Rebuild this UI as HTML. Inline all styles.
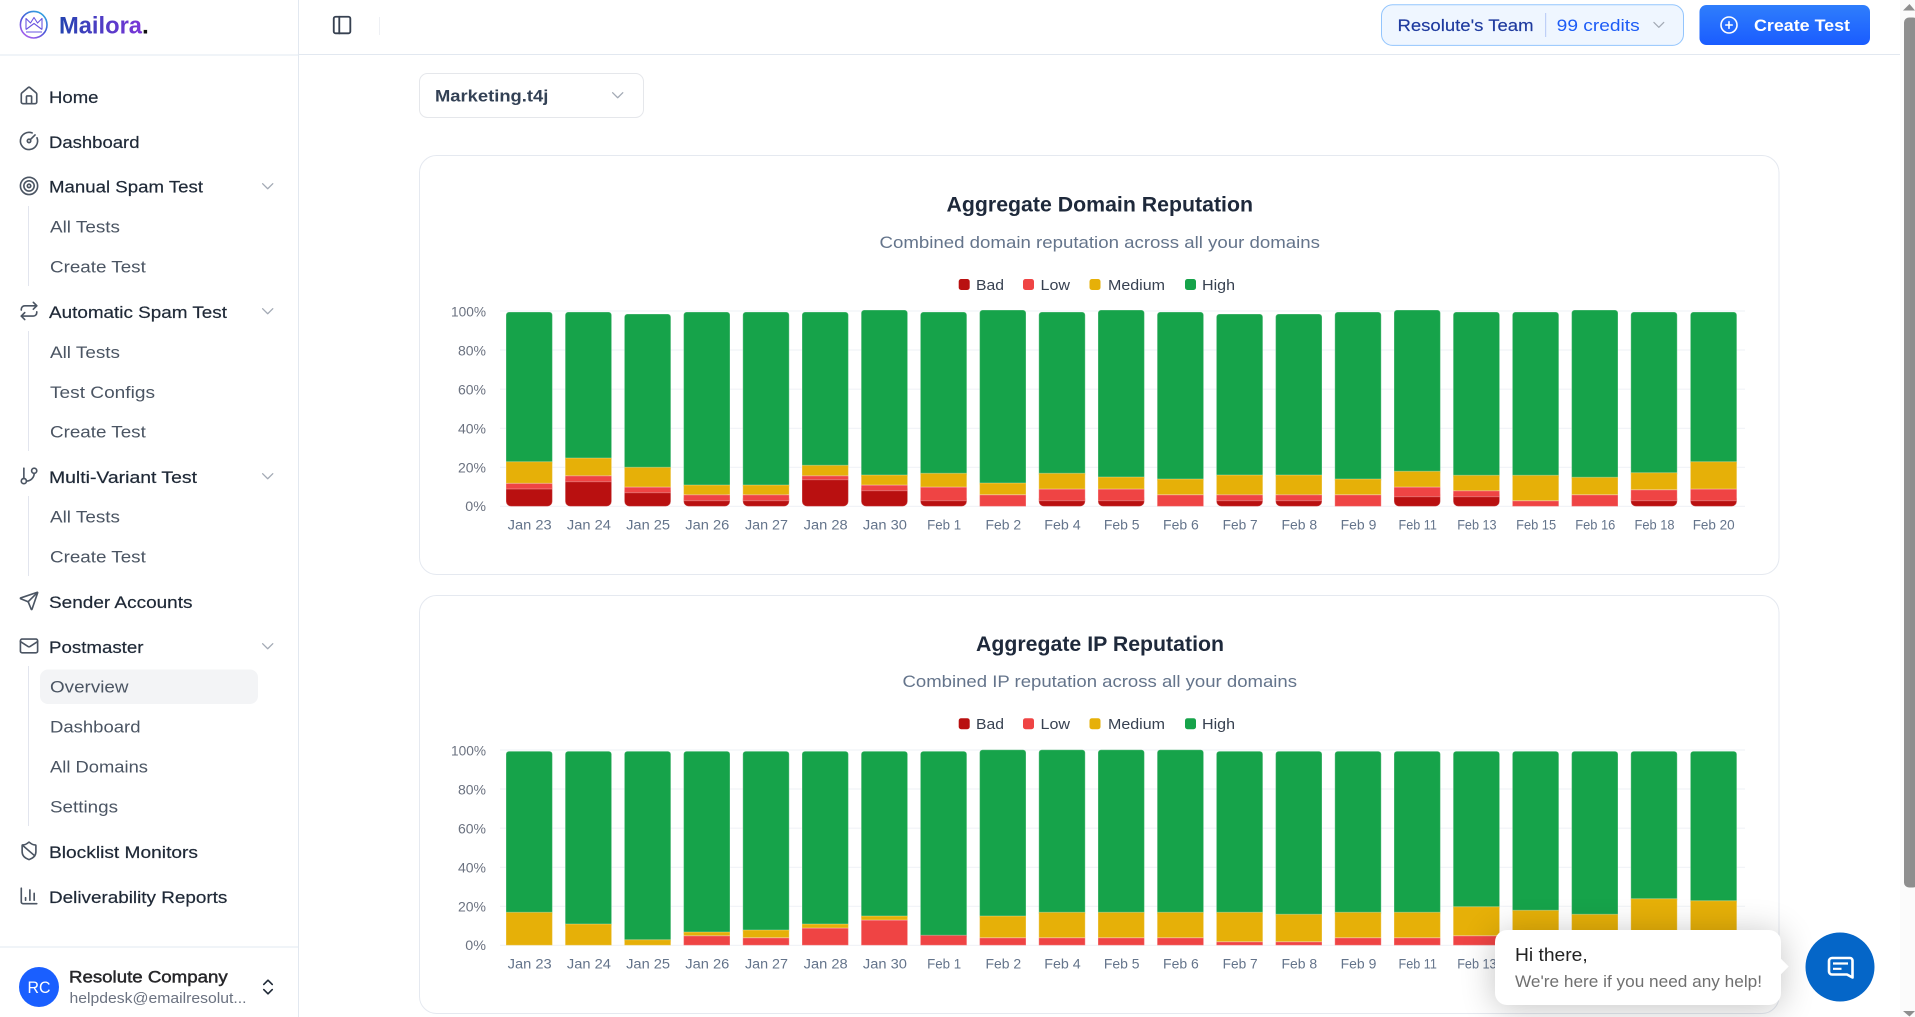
<!DOCTYPE html>
<html lang="en"><head><meta charset="utf-8"><title>Mailora</title>
<style>
html,body{margin:0;padding:0;width:1915px;height:1017px;overflow:hidden;background:#fff}
svg{position:absolute;left:0;top:0;display:block}
text{font-family:"Liberation Sans",sans-serif}
.t{font-size:16.5px;fill:#1f2937;stroke:#1f2937;stroke-width:.2px}
.s{font-size:16.5px;fill:#4b5563}
.i{fill:none;stroke:#4b5563;stroke-width:1.9;stroke-linecap:round;stroke-linejoin:round}
.c{fill:none;stroke:#a3aab5;stroke-width:1.5;stroke-linecap:round;stroke-linejoin:round}
.bars rect{width:46.4px;stroke:rgba(255,255,255,.3);stroke-width:1px}
.g{fill:#16a34a;rx:3px}.y{fill:#e6b008}.r{fill:#ef4444}.d{fill:#b91010;rx:5px}
.gl{stroke:#f1f3f7;stroke-width:1.2}
.yl{font-size:14.2px;fill:#6b7280;text-anchor:end}
.xl{font-size:14.2px;fill:#64748b;text-anchor:middle}
.lg{font-size:15px;fill:#374151}
.ti{font-size:21.5px;font-weight:700;fill:#1e293b}
.su{font-size:16.8px;fill:#64748b}
#pop{position:absolute;left:1495px;top:930px;width:286px;height:75px;background:#fff;border-radius:12px;box-shadow:0 3px 34px rgba(0,0,0,.24)}
#arr{position:absolute;left:1773px;top:960px;width:13px;height:13px;background:#fff;transform:rotate(45deg)}
</style></head><body>
<svg width="1915" height="1017" viewBox="0 0 1915 1017" xmlns="http://www.w3.org/2000/svg">
<defs>
<linearGradient id="lg1" gradientUnits="userSpaceOnUse" x1="59" y1="0" x2="142" y2="0"><stop offset="0" stop-color="#2344b0"/><stop offset="1" stop-color="#7a35d8"/></linearGradient>
<linearGradient id="lg2" gradientUnits="userSpaceOnUse" x1="42" y1="12" x2="25" y2="38"><stop offset="0" stop-color="#2fa6e0"/><stop offset=".5" stop-color="#4a55d8"/><stop offset="1" stop-color="#b060f0"/></linearGradient>
<linearGradient id="lg3" x1="0" y1="0" x2="0" y2="1"><stop offset="0" stop-color="#2f7efc"/><stop offset="1" stop-color="#1a5cff"/></linearGradient>
</defs>
<!-- chrome lines -->
<rect x="298" y="0" width="1" height="1017" fill="#e2e8f0"/>
<rect x="0" y="54.5" width="298" height="1" fill="#e2e8f0"/>
<rect x="299" y="54" width="1601" height="1" fill="#e2e8f0"/>
<rect x="0" y="946.5" width="298" height="1" fill="#e2e8f0"/>
<!-- logo -->
<circle cx="33.7" cy="24.7" r="13.3" fill="none" stroke="url(#lg2)" stroke-width="1.6"/>
<path d="M26 29.5V18.5L30.5 23L34 17.5L37.5 23L42 18.5V29.5M26 29.5L34 23.5L42 29.5M26 32H42" fill="none" stroke="#6a55e0" stroke-width="1.1" stroke-linejoin="round"/>
<text x="59" y="33.3" font-size="24.5" font-weight="700" fill="url(#lg1)" textLength="83" lengthAdjust="spacingAndGlyphs">Mailora</text>
<text x="142" y="33.3" font-size="24.5" font-weight="700" fill="#111">.</text>
<!-- nav rules + highlight -->
<g fill="#e2e5ee"><rect x="28" y="206" width="1" height="80"/><rect x="28" y="331" width="1" height="120"/><rect x="28" y="496" width="1" height="80"/><rect x="28" y="666" width="1" height="160"/></g>
<rect x="40" y="669.5" width="218" height="34.5" rx="8" fill="#f3f4f6"/>
<!-- icons -->
<g class="i">
<g transform="translate(18.7 85.6) scale(.86)"><path d="M15 21v-8a1 1 0 0 0-1-1h-4a1 1 0 0 0-1 1v8"/><path d="M3 10a2 2 0 0 1 .709-1.528l7-5.999a2 2 0 0 1 2.582 0l7 5.999A2 2 0 0 1 21 10v9a2 2 0 0 1-2 2H5a2 2 0 0 1-2-2z"/></g>
<g transform="translate(18.7 130.6) scale(.86)"><path d="M15.6 2.7a10 10 0 1 0 5.7 5.7"/><circle cx="12" cy="12" r="2"/><path d="M13.4 10.6 19 5"/></g>
<g transform="translate(18.7 175.6) scale(.86)"><circle cx="12" cy="12" r="10"/><circle cx="12" cy="12" r="6"/><circle cx="12" cy="12" r="2"/></g>
<g transform="translate(18.7 300.6) scale(.86)"><path d="m17 2 4 4-4 4"/><path d="M3 11v-1a4 4 0 0 1 4-4h14"/><path d="m7 22-4-4 4-4"/><path d="M21 13v1a4 4 0 0 1-4 4H3"/></g>
<g transform="translate(18.7 465.6) scale(.86)"><path d="M6 3v12"/><circle cx="18" cy="6" r="3"/><circle cx="6" cy="18" r="3"/><path d="M18 9a9 9 0 0 1-9 9"/></g>
<g transform="translate(18.7 590.6) scale(.86)"><path d="M14.536 21.686a.5.5 0 0 0 .937-.024l6.5-19a.496.496 0 0 0-.635-.635l-19 6.5a.5.5 0 0 0-.024.937l7.93 3.18a2 2 0 0 1 1.112 1.11z"/><path d="m21.854 2.147-10.94 10.939"/></g>
<g transform="translate(18.7 635.6) scale(.86)"><rect x="2" y="4" width="20" height="16" rx="2"/><path d="m22 7-8.97 5.7a1.94 1.94 0 0 1-2.06 0L2 7"/></g>
<g transform="translate(18.7 840.6) scale(.86)"><path d="M20 13c0 5-3.5 7.5-7.66 8.95a1 1 0 0 1-.67-.01C7.5 20.5 4 18 4 13V6a1 1 0 0 1 1-1c2 0 4.5-1.2 6.24-2.72a1.17 1.17 0 0 1 1.52 0C14.51 3.81 17 5 19 5a1 1 0 0 1 1 1z"/><path d="m4.243 5.21 14.39 12.472"/></g>
<g transform="translate(18.7 885.6) scale(.86)"><path d="M3 3v16a2 2 0 0 0 2 2h16"/><path d="M18 17V9"/><path d="M13 17V5"/><path d="M8 17v-3"/></g>
</g>
<g class="c">
<path transform="translate(257.5 176) scale(.85)" d="m6 9 6 6 6-6"/>
<path transform="translate(257.5 301) scale(.85)" d="m6 9 6 6 6-6"/>
<path transform="translate(257.5 466) scale(.85)" d="m6 9 6 6 6-6"/>
<path transform="translate(257.5 636) scale(.85)" d="m6 9 6 6 6-6"/>
</g>
<!-- nav text -->
<text class="t" x="49" y="103" textLength="49.5" lengthAdjust="spacingAndGlyphs">Home</text>
<text class="t" x="49" y="148" textLength="90.5" lengthAdjust="spacingAndGlyphs">Dashboard</text>
<text class="t" x="49" y="192.5" textLength="154" lengthAdjust="spacingAndGlyphs">Manual Spam Test</text>
<text class="s" x="50" y="232.5" textLength="70" lengthAdjust="spacingAndGlyphs">All Tests</text>
<text class="s" x="50" y="272.5" textLength="95.8" lengthAdjust="spacingAndGlyphs">Create Test</text>
<text class="t" x="49" y="318" textLength="178" lengthAdjust="spacingAndGlyphs">Automatic Spam Test</text>
<text class="s" x="50" y="358" textLength="70" lengthAdjust="spacingAndGlyphs">All Tests</text>
<text class="s" x="50" y="398" textLength="105" lengthAdjust="spacingAndGlyphs">Test Configs</text>
<text class="s" x="50" y="437.7" textLength="95.8" lengthAdjust="spacingAndGlyphs">Create Test</text>
<text class="t" x="49" y="483" textLength="148" lengthAdjust="spacingAndGlyphs">Multi-Variant Test</text>
<text class="s" x="50" y="522.7" textLength="70" lengthAdjust="spacingAndGlyphs">All Tests</text>
<text class="s" x="50" y="562.7" textLength="95.8" lengthAdjust="spacingAndGlyphs">Create Test</text>
<text class="t" x="49" y="608" textLength="143.5" lengthAdjust="spacingAndGlyphs">Sender Accounts</text>
<text class="t" x="49" y="653" textLength="94.5" lengthAdjust="spacingAndGlyphs">Postmaster</text>
<text class="s" x="50" y="692.7" textLength="78.5" lengthAdjust="spacingAndGlyphs">Overview</text>
<text class="s" x="50" y="732.7" textLength="90.5" lengthAdjust="spacingAndGlyphs">Dashboard</text>
<text class="s" x="50" y="772.7" textLength="98" lengthAdjust="spacingAndGlyphs">All Domains</text>
<text class="s" x="50" y="812.7" textLength="68" lengthAdjust="spacingAndGlyphs">Settings</text>
<text class="t" x="49" y="858" textLength="149" lengthAdjust="spacingAndGlyphs">Blocklist Monitors</text>
<text class="t" x="49" y="903" textLength="178.3" lengthAdjust="spacingAndGlyphs">Deliverability Reports</text>
<!-- footer -->
<circle cx="39" cy="987" r="20" fill="#1a5fff"/>
<text x="39" y="993" font-size="16.5" fill="#fff" text-anchor="middle" textLength="23" lengthAdjust="spacingAndGlyphs">RC</text>
<text x="69" y="982.7" font-size="16.5" fill="#27272a" stroke="#27272a" stroke-width=".45" textLength="158.7" lengthAdjust="spacingAndGlyphs">Resolute Company</text>
<text x="69.5" y="1003" font-size="14.5" fill="#6b7280" textLength="177" lengthAdjust="spacingAndGlyphs">helpdesk@emailresolut...</text>
<g transform="translate(257.8 976.8) scale(.85)" fill="none" stroke="#1f2937" stroke-width="1.9" stroke-linecap="round" stroke-linejoin="round"><path d="m7 15 5 5 5-5"/><path d="m7 9 5-5 5 5"/></g>
<!-- header -->
<g transform="translate(331 14) scale(.92)" fill="none" stroke="#374151" stroke-width="2" stroke-linecap="round" stroke-linejoin="round"><rect x="3" y="3" width="18" height="18" rx="2"/><path d="M9 3v18"/></g>
<rect x="379" y="17" width="1" height="18" fill="#eef0f4"/>
<rect x="1381.5" y="4.8" width="302" height="40.6" rx="11" fill="#eff6ff" stroke="#93c5fd" stroke-width="1"/>
<text x="1397.5" y="31" font-size="16.5" fill="#1e3a9f" stroke="#1e3a9f" stroke-width=".15" textLength="136" lengthAdjust="spacingAndGlyphs">Resolute's Team</text>
<rect x="1545" y="13" width="1.2" height="24" fill="#bfd0f7"/>
<text x="1556.7" y="31" font-size="16.5" fill="#1d5cf6" textLength="83" lengthAdjust="spacingAndGlyphs">99 credits</text>
<path class="c" transform="translate(1649 15) scale(.82)" d="m6 9 6 6 6-6"/>
<rect x="1699.5" y="5" width="170.5" height="40" rx="7" fill="url(#lg3)"/>
<g transform="translate(1719.4 15.4) scale(.8)" fill="none" stroke="#fff" stroke-width="2" stroke-linecap="round"><circle cx="12" cy="12" r="10"/><path d="M8 12h8"/><path d="M12 8v8"/></g>
<text x="1754" y="31" font-size="16.5" font-weight="700" fill="#fff" textLength="96" lengthAdjust="spacingAndGlyphs">Create Test</text>
<!-- scrollbar -->
<rect x="1900" y="0" width="15" height="1017" fill="#fbfbfb"/>
<rect x="1904" y="17.5" width="14" height="870" rx="5" fill="#8e8e8e"/>
<path d="M1909.5 4L1915 10.5H1903z" fill="#8e8e8e"/>
<path d="M1909.5 1016.5L1915 1011H1903z" fill="#8e8e8e"/>
<!-- select -->
<rect x="419.5" y="73.5" width="224" height="44" rx="8" fill="#fff" stroke="#e5e7eb"/>
<text x="435" y="101.7" font-size="17" font-weight="700" fill="#334155" textLength="113.3" lengthAdjust="spacingAndGlyphs">Marketing.t4j</text>
<path class="c" transform="translate(607.5 85) scale(.85)" d="m6 9 6 6 6-6"/>
<!-- card 1 -->
<rect x="419.5" y="155.5" width="1359.5" height="419" rx="17" fill="#fff" stroke="#e5e9f0"/>
<text class="ti" x="946.5" y="211.5" textLength="306.5" lengthAdjust="spacingAndGlyphs">Aggregate Domain Reputation</text>
<text class="su" x="879.5" y="248" textLength="440.5" lengthAdjust="spacingAndGlyphs">Combined domain reputation across all your domains</text>
<rect x="958.7" y="279" width="11" height="11" rx="2.5" fill="#b91010"/><text class="lg" x="976" y="290" textLength="28" lengthAdjust="spacingAndGlyphs">Bad</text>
<rect x="1023" y="279" width="11" height="11" rx="2.5" fill="#ef4444"/><text class="lg" x="1040.5" y="290" textLength="29.5" lengthAdjust="spacingAndGlyphs">Low</text>
<rect x="1089.5" y="279" width="11" height="11" rx="2.5" fill="#e6b008"/><text class="lg" x="1108" y="290" textLength="57" lengthAdjust="spacingAndGlyphs">Medium</text>
<rect x="1185" y="279" width="11" height="11" rx="2.5" fill="#16a34a"/><text class="lg" x="1202" y="290" textLength="33" lengthAdjust="spacingAndGlyphs">High</text>
<g class="gl"><path d="M500 311H1745M500 350H1745M500 389.2H1745M500 428.3H1745M500 467.3H1745M500 506.4H1745"/></g>
<g class="yl">
<text x="486" y="316.7" textLength="35" lengthAdjust="spacingAndGlyphs">100%</text>
<text x="486" y="355.7" textLength="28" lengthAdjust="spacingAndGlyphs">80%</text>
<text x="486" y="394.7" textLength="28" lengthAdjust="spacingAndGlyphs">60%</text>
<text x="486" y="433.7" textLength="28" lengthAdjust="spacingAndGlyphs">40%</text>
<text x="486" y="472.7" textLength="28" lengthAdjust="spacingAndGlyphs">20%</text>
<text x="486" y="511.2" textLength="20.7" lengthAdjust="spacingAndGlyphs">0%</text>
</g>
<g class="bars">
<g transform="translate(506 0)"><rect class="g" y="312" height="153.7"/><rect class="d" y="482" height="24.4"/><rect class="r" y="483.3" height="5.7"/><rect class="y" y="461.7" height="21.6"/></g>
<g transform="translate(565.2 0)"><rect class="g" y="312" height="150"/><rect class="d" y="474.7" height="31.7"/><rect class="r" y="475.7" height="6"/><rect class="y" y="458" height="17.7"/></g>
<g transform="translate(624.4 0)"><rect class="g" y="314" height="157.3"/><rect class="d" y="485.7" height="20.7"/><rect class="r" y="487" height="5.7"/><rect class="y" y="467.3" height="19.7"/></g>
<g transform="translate(683.6 0)"><rect class="g" y="312" height="177"/><rect class="d" y="493.7" height="12.7"/><rect class="r" y="494.7" height="6"/><rect class="y" y="485" height="9.7"/></g>
<g transform="translate(742.8 0)"><rect class="g" y="312" height="177"/><rect class="d" y="493.7" height="12.7"/><rect class="r" y="494.7" height="6"/><rect class="y" y="485" height="9.7"/></g>
<g transform="translate(802 0)"><rect class="g" y="312" height="157.3"/><rect class="d" y="472.7" height="33.7"/><rect class="r" y="475.7" height="4"/><rect class="y" y="465.3" height="10.4"/></g>
<g transform="translate(861.2 0)"><rect class="g" y="310" height="169"/><rect class="d" y="483.7" height="22.7"/><rect class="r" y="485" height="5.7"/><rect class="y" y="475" height="10"/></g>
<g transform="translate(920.4 0)"><rect class="g" y="312" height="165.3"/><rect class="d" y="493.7" height="12.7"/><rect class="r" y="487" height="13.7"/><rect class="y" y="473.3" height="13.7"/></g>
<g transform="translate(979.6 0)"><rect class="g" y="310" height="177"/><rect class="r" y="494.7" height="11.7"/><rect class="y" y="483" height="11.7"/></g>
<g transform="translate(1038.8 0)"><rect class="g" y="312" height="165.3"/><rect class="d" y="493.7" height="12.7"/><rect class="r" y="489" height="11.7"/><rect class="y" y="473.3" height="15.7"/></g>
<g transform="translate(1098 0)"><rect class="g" y="310" height="171"/><rect class="d" y="493.7" height="12.7"/><rect class="r" y="489" height="11.7"/><rect class="y" y="477" height="12"/></g>
<g transform="translate(1157.2 0)"><rect class="g" y="312" height="171"/><rect class="r" y="494.7" height="11.7"/><rect class="y" y="479" height="15.7"/></g>
<g transform="translate(1216.4 0)"><rect class="g" y="314" height="165"/><rect class="d" y="493.7" height="12.7"/><rect class="r" y="494.7" height="6"/><rect class="y" y="475" height="19.7"/></g>
<g transform="translate(1275.6 0)"><rect class="g" y="314" height="165"/><rect class="d" y="493.7" height="12.7"/><rect class="r" y="494.7" height="6"/><rect class="y" y="475" height="19.7"/></g>
<g transform="translate(1334.8 0)"><rect class="g" y="312" height="171"/><rect class="r" y="494.7" height="11.7"/><rect class="y" y="479" height="15.7"/></g>
<g transform="translate(1394 0)"><rect class="g" y="310" height="165.3"/><rect class="d" y="489.7" height="16.7"/><rect class="r" y="487" height="9.7"/><rect class="y" y="471.3" height="15.7"/></g>
<g transform="translate(1453.2 0)"><rect class="g" y="312" height="167.3"/><rect class="d" y="489.7" height="16.7"/><rect class="r" y="490.7" height="6"/><rect class="y" y="475.3" height="15.4"/></g>
<g transform="translate(1512.4 0)"><rect class="g" y="312" height="167.3"/><rect class="r" y="500.7" height="5.7"/><rect class="y" y="475.3" height="25.4"/></g>
<g transform="translate(1571.6 0)"><rect class="g" y="310" height="171.3"/><rect class="r" y="494.7" height="11.7"/><rect class="y" y="477.3" height="17.4"/></g>
<g transform="translate(1630.8 0)"><rect class="g" y="312" height="164.7"/><rect class="d" y="493.7" height="12.7"/><rect class="r" y="489.7" height="11"/><rect class="y" y="472.7" height="17"/></g>
<g transform="translate(1690.4 0)"><rect class="g" y="312" height="153.7"/><rect class="d" y="493.7" height="12.7"/><rect class="r" y="489" height="11.7"/><rect class="y" y="461.7" height="27.3"/></g>
</g>
<g class="xl">
<text x="529.7" y="529.3" textLength="44" lengthAdjust="spacingAndGlyphs">Jan 23</text>
<text x="588.9" y="529.3" textLength="44" lengthAdjust="spacingAndGlyphs">Jan 24</text>
<text x="648.1" y="529.3" textLength="44" lengthAdjust="spacingAndGlyphs">Jan 25</text>
<text x="707.3" y="529.3" textLength="44" lengthAdjust="spacingAndGlyphs">Jan 26</text>
<text x="766.5" y="529.3" textLength="43" lengthAdjust="spacingAndGlyphs">Jan 27</text>
<text x="825.7" y="529.3" textLength="44" lengthAdjust="spacingAndGlyphs">Jan 28</text>
<text x="884.9" y="529.3" textLength="44" lengthAdjust="spacingAndGlyphs">Jan 30</text>
<text x="944.1" y="529.3" textLength="34" lengthAdjust="spacingAndGlyphs">Feb 1</text>
<text x="1003.3" y="529.3" textLength="35.7" lengthAdjust="spacingAndGlyphs">Feb 2</text>
<text x="1062.5" y="529.3" textLength="36.5" lengthAdjust="spacingAndGlyphs">Feb 4</text>
<text x="1121.7" y="529.3" textLength="35.7" lengthAdjust="spacingAndGlyphs">Feb 5</text>
<text x="1180.9" y="529.3" textLength="35.7" lengthAdjust="spacingAndGlyphs">Feb 6</text>
<text x="1240.1" y="529.3" textLength="35" lengthAdjust="spacingAndGlyphs">Feb 7</text>
<text x="1299.3" y="529.3" textLength="35.7" lengthAdjust="spacingAndGlyphs">Feb 8</text>
<text x="1358.5" y="529.3" textLength="35.7" lengthAdjust="spacingAndGlyphs">Feb 9</text>
<text x="1417.7" y="529.3" textLength="38.3" lengthAdjust="spacingAndGlyphs">Feb 11</text>
<text x="1476.9" y="529.3" textLength="39.4" lengthAdjust="spacingAndGlyphs">Feb 13</text>
<text x="1536.1" y="529.3" textLength="40" lengthAdjust="spacingAndGlyphs">Feb 15</text>
<text x="1595.3" y="529.3" textLength="40" lengthAdjust="spacingAndGlyphs">Feb 16</text>
<text x="1654.5" y="529.3" textLength="40" lengthAdjust="spacingAndGlyphs">Feb 18</text>
<text x="1713.7" y="529.3" textLength="42" lengthAdjust="spacingAndGlyphs">Feb 20</text>
</g>
<!-- card 2 -->
<rect x="419.5" y="595.5" width="1359.5" height="418" rx="17" fill="#fff" stroke="#e5e9f0"/>
<text class="ti" x="976" y="651" textLength="248" lengthAdjust="spacingAndGlyphs">Aggregate IP Reputation</text>
<text class="su" x="902.5" y="687" textLength="394.5" lengthAdjust="spacingAndGlyphs">Combined IP reputation across all your domains</text>
<rect x="958.7" y="718.2" width="11" height="11" rx="2.5" fill="#b91010"/><text class="lg" x="976" y="729.2" textLength="28" lengthAdjust="spacingAndGlyphs">Bad</text>
<rect x="1023" y="718.2" width="11" height="11" rx="2.5" fill="#ef4444"/><text class="lg" x="1040.5" y="729.2" textLength="29.5" lengthAdjust="spacingAndGlyphs">Low</text>
<rect x="1089.5" y="718.2" width="11" height="11" rx="2.5" fill="#e6b008"/><text class="lg" x="1108" y="729.2" textLength="57" lengthAdjust="spacingAndGlyphs">Medium</text>
<rect x="1185" y="718.2" width="11" height="11" rx="2.5" fill="#16a34a"/><text class="lg" x="1202" y="729.2" textLength="33" lengthAdjust="spacingAndGlyphs">High</text>
<g class="gl"><path d="M500 750H1745M500 789H1745M500 828.2H1745M500 867.3H1745M500 906.3H1745M500 945.4H1745"/></g>
<g class="yl">
<text x="486" y="755.7" textLength="35" lengthAdjust="spacingAndGlyphs">100%</text>
<text x="486" y="794.7" textLength="28" lengthAdjust="spacingAndGlyphs">80%</text>
<text x="486" y="833.7" textLength="28" lengthAdjust="spacingAndGlyphs">60%</text>
<text x="486" y="872.7" textLength="28" lengthAdjust="spacingAndGlyphs">40%</text>
<text x="486" y="911.7" textLength="28" lengthAdjust="spacingAndGlyphs">20%</text>
<text x="486" y="950.2" textLength="20.7" lengthAdjust="spacingAndGlyphs">0%</text>
</g>
<g class="bars">
<g transform="translate(506 0)"><rect class="g" y="751.2" height="165.1"/><rect class="y" y="912.3" height="33"/></g>
<g transform="translate(565.2 0)"><rect class="g" y="751.2" height="176.8"/><rect class="y" y="924" height="21.3"/></g>
<g transform="translate(624.4 0)"><rect class="g" y="751.2" height="192.5"/><rect class="y" y="939.7" height="5.6"/></g>
<g transform="translate(683.6 0)"><rect class="g" y="751.2" height="184.8"/><rect class="r" y="935.7" height="9.6"/><rect class="y" y="932" height="3.7"/></g>
<g transform="translate(742.8 0)"><rect class="g" y="751.2" height="182.8"/><rect class="r" y="937.7" height="7.6"/><rect class="y" y="930" height="7.7"/></g>
<g transform="translate(802 0)"><rect class="g" y="751.2" height="176.8"/><rect class="r" y="928" height="17.3"/><rect class="y" y="924" height="4"/></g>
<g transform="translate(861.2 0)"><rect class="g" y="751.2" height="168.8"/><rect class="r" y="920" height="25.3"/><rect class="y" y="916" height="4"/></g>
<g transform="translate(920.4 0)"><rect class="g" y="751.2" height="188.1"/><rect class="r" y="935.3" height="10"/></g>
<g transform="translate(979.6 0)"><rect class="g" y="749.7" height="170.2"/><rect class="r" y="937.7" height="7.6"/><rect class="y" y="916" height="21.7"/></g>
<g transform="translate(1038.8 0)"><rect class="g" y="749.7" height="166.6"/><rect class="r" y="937.7" height="7.6"/><rect class="y" y="912.3" height="25.4"/></g>
<g transform="translate(1098 0)"><rect class="g" y="749.7" height="166.6"/><rect class="r" y="937.7" height="7.6"/><rect class="y" y="912.3" height="25.4"/></g>
<g transform="translate(1157.2 0)"><rect class="g" y="749.7" height="166.6"/><rect class="r" y="937.7" height="7.6"/><rect class="y" y="912.3" height="25.4"/></g>
<g transform="translate(1216.4 0)"><rect class="g" y="751.2" height="165.1"/><rect class="r" y="941.7" height="3.6"/><rect class="y" y="912.3" height="29.4"/></g>
<g transform="translate(1275.6 0)"><rect class="g" y="751.2" height="167.1"/><rect class="r" y="941.7" height="3.6"/><rect class="y" y="914.3" height="27.4"/></g>
<g transform="translate(1334.8 0)"><rect class="g" y="751.2" height="165.1"/><rect class="r" y="937.7" height="7.6"/><rect class="y" y="912.3" height="25.4"/></g>
<g transform="translate(1394 0)"><rect class="g" y="751.2" height="165.1"/><rect class="r" y="937.7" height="7.6"/><rect class="y" y="912.3" height="25.4"/></g>
<g transform="translate(1453.2 0)"><rect class="g" y="751.2" height="159.5"/><rect class="r" y="935.7" height="9.6"/><rect class="y" y="906.7" height="29"/></g>
<g transform="translate(1512.4 0)"><rect class="g" y="751.2" height="163.1"/><rect class="y" y="910.3" height="35"/></g>
<g transform="translate(1571.6 0)"><rect class="g" y="751.2" height="167.1"/><rect class="y" y="914.3" height="31"/></g>
<g transform="translate(1630.8 0)"><rect class="g" y="751.2" height="151.5"/><rect class="y" y="898.7" height="46.6"/></g>
<g transform="translate(1690.4 0)"><rect class="g" y="751.2" height="153.5"/><rect class="y" y="900.7" height="44.6"/></g>
</g>
<g class="xl">
<text x="529.7" y="968.3" textLength="44" lengthAdjust="spacingAndGlyphs">Jan 23</text>
<text x="588.9" y="968.3" textLength="44" lengthAdjust="spacingAndGlyphs">Jan 24</text>
<text x="648.1" y="968.3" textLength="44" lengthAdjust="spacingAndGlyphs">Jan 25</text>
<text x="707.3" y="968.3" textLength="44" lengthAdjust="spacingAndGlyphs">Jan 26</text>
<text x="766.5" y="968.3" textLength="43" lengthAdjust="spacingAndGlyphs">Jan 27</text>
<text x="825.7" y="968.3" textLength="44" lengthAdjust="spacingAndGlyphs">Jan 28</text>
<text x="884.9" y="968.3" textLength="44" lengthAdjust="spacingAndGlyphs">Jan 30</text>
<text x="944.1" y="968.3" textLength="34" lengthAdjust="spacingAndGlyphs">Feb 1</text>
<text x="1003.3" y="968.3" textLength="35.7" lengthAdjust="spacingAndGlyphs">Feb 2</text>
<text x="1062.5" y="968.3" textLength="36.5" lengthAdjust="spacingAndGlyphs">Feb 4</text>
<text x="1121.7" y="968.3" textLength="35.7" lengthAdjust="spacingAndGlyphs">Feb 5</text>
<text x="1180.9" y="968.3" textLength="35.7" lengthAdjust="spacingAndGlyphs">Feb 6</text>
<text x="1240.1" y="968.3" textLength="35" lengthAdjust="spacingAndGlyphs">Feb 7</text>
<text x="1299.3" y="968.3" textLength="35.7" lengthAdjust="spacingAndGlyphs">Feb 8</text>
<text x="1358.5" y="968.3" textLength="35.7" lengthAdjust="spacingAndGlyphs">Feb 9</text>
<text x="1417.7" y="968.3" textLength="38.3" lengthAdjust="spacingAndGlyphs">Feb 11</text>
<text x="1476.9" y="968.3" textLength="39.4" lengthAdjust="spacingAndGlyphs">Feb 13</text>
</g>
</svg>
<div id="pop"></div>
<div id="arr"></div>
<svg width="1915" height="1017" viewBox="0 0 1915 1017" xmlns="http://www.w3.org/2000/svg" style="pointer-events:none">
<text x="1515" y="961" font-size="18" fill="#222" textLength="72.7" lengthAdjust="spacingAndGlyphs">Hi there,</text>
<text x="1515" y="987" font-size="16.3" fill="#707070" textLength="247" lengthAdjust="spacingAndGlyphs">We're here if you need any help!</text>
<circle cx="1840" cy="967" r="34.5" fill="#0566c8"/>
<path d="M1832 958h18a2.5 2.5 0 0 1 2.5 2.5V977.5l-5.5-3H1832a3 3 0 0 1-3-3v-10.5a3 3 0 0 1 3-3z" fill="none" stroke="#fff" stroke-width="2.6" stroke-linejoin="round"/>
<path d="M1833 963.5H1848M1833 968.8H1841.5" stroke="#fff" stroke-width="2.2" fill="none"/>
</svg>
</body></html>
